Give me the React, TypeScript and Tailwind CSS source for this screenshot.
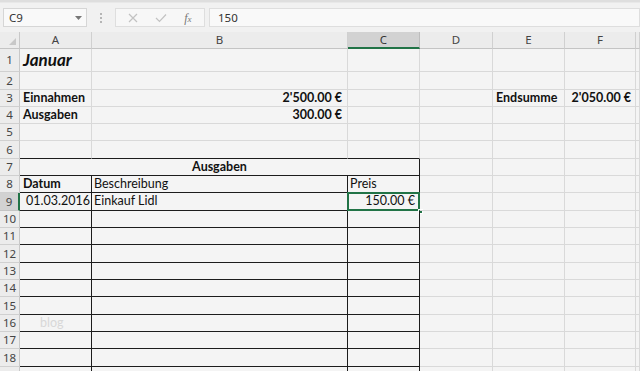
import React from "react";

const font = { fontFamily: "Lato, 'Open Sans', sans-serif" };
const uiFont = { fontFamily: "'Noto Sans', 'DejaVu Sans', sans-serif" };

const colLetters = ["A", "B", "C", "D", "E", "F", ""];
const rowHeights = [23, 18, 17, 17, 17, 18, 17, 17, 18, 17, 17, 18, 17, 17, 18, 17, 17, 18, 17];

type Cell = { text?: string; cls?: string };

function getCell(r: number, c: number): Cell {
  if (r === 1 && c === 0) return { text: "Januar", cls: "font-bold italic text-[17px] pl-[3px]" };
  if (r === 3 && c === 0) return { text: "Einnahmen", cls: "font-bold pl-[3px]" };
  if (r === 3 && c === 1) return { text: "2'500.00 €", cls: "font-bold justify-end pr-[5px]" };
  if (r === 3 && c === 4) return { text: "Endsumme", cls: "font-bold pl-[3px]" };
  if (r === 3 && c === 5) return { text: "2'050.00 €", cls: "font-bold justify-end pr-[4px]" };
  if (r === 4 && c === 0) return { text: "Ausgaben", cls: "font-bold pl-[3px]" };
  if (r === 4 && c === 1) return { text: "300.00 €", cls: "font-bold justify-end pr-[5px]" };
  if (r === 8 && c === 0) return { text: "Datum", cls: "font-bold pl-[3px]" };
  if (r === 8 && c === 1) return { text: "Beschreibung", cls: "pl-[2px]" };
  if (r === 8 && c === 2) return { text: "Preis", cls: "pl-[2px]" };
  if (r === 9 && c === 0) return { text: "01.03.2016", cls: "justify-end pr-[1px]" };
  if (r === 9 && c === 1) return { text: "Einkauf Lidl", cls: "pl-[2px]" };
  if (r === 9 && c === 2) return { text: "150.00 €", cls: "justify-end pr-[4px]" };
  if (r === 16 && c === 0) return { text: "blog", cls: "pl-[20px] text-[#d8d8d8] text-[11px]" };
  return {};
}

function borderCls(r: number, c: number): string {
  const inTable = c <= 2;
  const bottomBlack = inTable && r >= 6 && r <= 18;
  let rightBlack = false;
  if (c === 2 && r >= 7) rightBlack = true;
  if ((c === 0 || c === 1) && r >= 8) rightBlack = true;
  const b = bottomBlack ? "border-b-[#1c1c1c]" : "border-b-[#d9d9d9]";
  const rr = rightBlack ? "border-r-[#1c1c1c]" : "border-r-[#d9d9d9]";
  return `border-b border-r ${b} ${rr}`;
}

function Row({ r }: { r: number }) {
  const h = rowHeights[r - 1];
  const selected = r === 9;
  const cells: React.ReactNode[] = [];
  cells.push(
    <div
      key="h"
      style={{ height: h }}
      className={
        selected
          ? "flex items-center justify-center bg-[#d2d2d2] border-b border-b-[#c4c4c4] border-r-2 border-r-[#217346] text-[11.5px] text-[#444]"
          : "flex items-center justify-center bg-[#ececec] border-b border-b-[#d0d0d0] border-r border-r-[#c8c8c8] text-[11.5px] text-[#444]"
      }
    >
      {r <= 18 && <span style={uiFont}>{r}</span>}
    </div>
  );
  if (r === 7) {
    cells.push(
      <div
        key="m"
        style={{ height: h }}
        className="col-span-3 flex items-center justify-center font-bold text-[12.5px] text-[#111] border-b border-r border-b-[#1c1c1c] border-r-[#1c1c1c]"
      >
        Ausgaben
      </div>
    );
    for (let c = 3; c < 7; c++) {
      cells.push(<div key={c} style={{ height: h }} className={borderCls(r, c)} />);
    }
  } else {
    for (let c = 0; c < 7; c++) {
      const cell = getCell(r, c);
      const isSel = r === 9 && c === 2;
      cells.push(
        <div
          key={c}
          style={{ height: h }}
          className={`relative flex items-center whitespace-nowrap overflow-visible text-[12.5px] text-[#111] ${borderCls(r, c)} ${cell.cls ?? ""}`}
        >
          {cell.text}
          {isSel && (
            <>
              <div className="absolute left-[-1px] top-[-1px] right-[-1px] bottom-[-1px] border-2 border-[#217346] pointer-events-none" />
              <div className="absolute right-[-4px] bottom-[-4px] w-[5px] h-[5px] bg-[#217346] border border-white" />
            </>
          )}
        </div>
      );
    }
  }
  return <>{cells}</>;
}

export default function App() {
  return (
    <div className="w-[640px] h-[371px] overflow-hidden bg-[#f4f4f4] flex flex-col" style={font}>
      {/* Formula bar */}
      <div className="h-[32px] shrink-0 bg-[#f1f1f1] flex flex-col">
        <div className="h-[3px] bg-[#dedede] border-b border-b-[#e8e8e8]" />
        <div className="flex items-start pt-[5px]">
          <div className="ml-[3px] w-[84px] h-[19px] bg-[#f9f9f9] border border-[#d6d6d6] flex items-center justify-between pl-[5px] pr-[4px]">
            <span style={uiFont} className="text-[11.5px] text-[#333]">C9</span>
            <svg width="7" height="4" viewBox="0 0 7 4">
              <path d="M0 0 L7 0 L3.5 4 Z" fill="#777" />
            </svg>
          </div>
          <div className="w-[28px] h-[19px] flex flex-col items-center justify-center gap-[2px]">
            <span className="w-[2px] h-[2px] bg-[#b5b5b5]" />
            <span className="w-[2px] h-[2px] bg-[#b5b5b5]" />
            <span className="w-[2px] h-[2px] bg-[#b5b5b5]" />
          </div>
          <div className="w-[90px] h-[19px] bg-[#f7f7f7] border border-[#dedede] flex items-center justify-around px-[4px]">
            <svg width="10" height="10" viewBox="0 0 10 10">
              <path d="M1 1 L9 9 M9 1 L1 9" stroke="#c2c2c2" strokeWidth="1.2" />
            </svg>
            <svg width="12" height="10" viewBox="0 0 12 10">
              <path d="M1 5 L4.5 8.5 L11 1.5" stroke="#c2c2c2" strokeWidth="1.2" fill="none" />
            </svg>
            <span className="text-[12px] italic text-[#777]" style={{ fontFamily: "'Liberation Serif', serif" }}>
              f<span className="text-[9px]">x</span>
            </span>
          </div>
          <div className="ml-[4px] flex-1 h-[19px] bg-[#f9f9f9] border border-[#dedede] flex items-center pl-[8px]">
            <span style={uiFont} className="text-[11.5px] text-[#333]">150</span>
          </div>
        </div>
      </div>
      {/* Grid */}
      <div className="grid grid-cols-[20px_72px_256px_72px_73px_72px_71px_1fr]">
        <div className="h-[17px] bg-[#ececec] border-b border-r border-b-[#c4c4c4] border-r-[#c8c8c8] relative">
          <svg className="absolute right-[3px] bottom-[3px]" width="7" height="7" viewBox="0 0 7 7">
            <path d="M7 0 L7 7 L0 7 Z" fill="#c8c8c8" />
          </svg>
        </div>
        {colLetters.map((l, i) => (
          <div
            key={i}
            style={uiFont}
            className={
              i === 2
                ? "h-[17px] flex items-center justify-center bg-[#d2d2d2] border-b-2 border-b-[#217346] border-r border-r-[#bdbdbd] text-[11.5px] text-[#333]"
                : "h-[17px] flex items-center justify-center bg-[#ececec] border-b border-b-[#c4c4c4] border-r border-r-[#d0d0d0] text-[11.5px] text-[#444]"
            }
          >
            {l}
          </div>
        ))}
        {rowHeights.map((_, i) => (
          <Row key={i} r={i + 1} />
        ))}
      </div>
    </div>
  );
}
